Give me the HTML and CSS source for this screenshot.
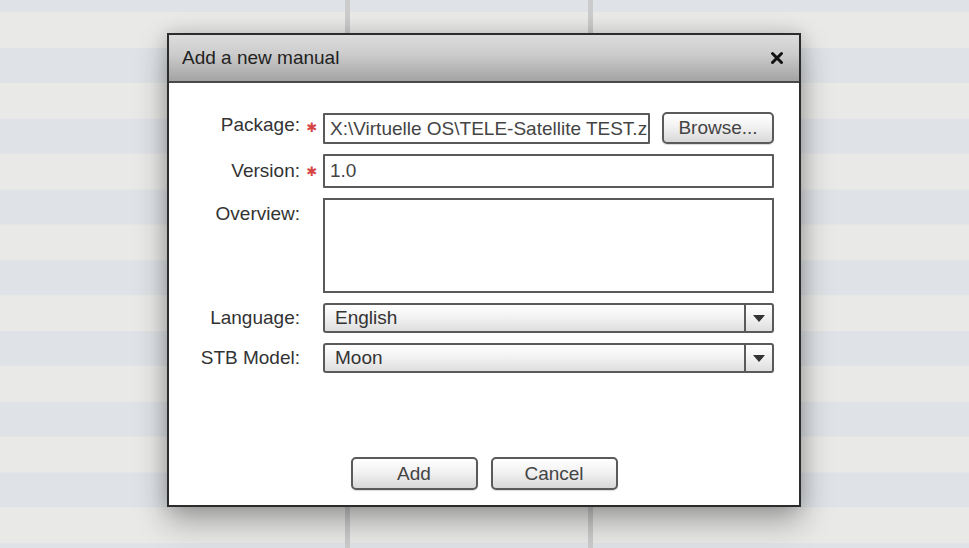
FILE: index.html
```html
<!DOCTYPE html>
<html>
<head>
<meta charset="utf-8">
<link rel="stylesheet" href="styles.css">
</head>
<body>
<div class="page">
  <div class="cols">
    <div class="col col-a"></div>
    <div class="col col-b"></div>
    <div class="col col-c"></div>
  </div>
  <div class="dialog">
    <div class="dialog-header">
      <span class="dialog-title">Add a new manual</span>
      <span class="close">
        <svg width="14" height="14" viewBox="0 0 14 14"><path d="M2.5 2.5 L11.5 11.5 M11.5 2.5 L2.5 11.5" stroke="#111" stroke-width="3" stroke-linecap="round"/></svg>
      </span>
    </div>
    <div class="dialog-body">
      <div class="form">
        <label class="lbl lbl-pkg">Package:</label>
        <span class="req">✱</span>
        <div class="field-row">
          <div class="input input-package">X:\Virtuelle OS\TELE-Satellite TEST.z</div>
          <button class="btn btn-browse">Browse...</button>
        </div>

        <label class="lbl">Version:</label>
        <span class="req">✱</span>
        <div class="input input-version">1.0</div>

        <label class="lbl lbl-top">Overview:</label>
        <span class="req"></span>
        <div class="textarea"></div>

        <label class="lbl">Language:</label>
        <span class="req"></span>
        <div class="select"><span class="select-value">English</span><span class="select-arrow"><svg width="12" height="7" viewBox="0 0 12 7"><path d="M0 0 H12 L6 7 Z" fill="#333"/></svg></span></div>

        <label class="lbl">STB Model:</label>
        <span class="req"></span>
        <div class="select"><span class="select-value">Moon</span><span class="select-arrow"><svg width="12" height="7" viewBox="0 0 12 7"><path d="M0 0 H12 L6 7 Z" fill="#333"/></svg></span></div>
      </div>
      <div class="actions">
        <button class="btn btn-action">Add</button>
        <button class="btn btn-action">Cancel</button>
      </div>
    </div>
  </div>
</div>
</body>
</html>
```

FILE: styles.css
```css
html, body {
  margin: 0;
  padding: 0;
}
body {
  font-family: "Liberation Sans", Arial, sans-serif;
  color: #333;
}
.page {
  position: relative;
  width: 969px;
  height: 548px;
  overflow: hidden;
  background-color: #e9e9e7;
  background-image: linear-gradient(to bottom, #dfe2e6 0%, #dfe2e6 50%, #e9e9e7 50%, #e9e9e7 100%);
  background-size: 100% 70.75px;
  background-repeat: repeat-y;
  background-position: 0 48px;
}
.cols {
  display: flex;
  height: 100%;
}
.col-a {
  width: 345px;
  border-right: 5px solid #cbcbcb;
}
.col-b {
  width: 238px;
  border-right: 5px solid #cbcbcb;
}
.col-c {
  flex: 1;
}
.dialog {
  position: absolute;
  left: 167px;
  top: 33px;
  width: 634px;
  height: 474px;
  box-sizing: border-box;
  border: 2px solid #2c2c2c;
  background: #fff;
  display: flex;
  flex-direction: column;
  box-shadow: 0 14px 30px rgba(0,0,0,0.32), 0 0 16px rgba(0,0,0,0.14);
}
.dialog-header {
  height: 46px;
  border-bottom: 2px solid #4a4a4a;
  background: linear-gradient(to bottom, #dcdcdc 0%, #cdcdcd 40%, #a4a4a4 100%);
  display: flex;
  align-items: center;
  justify-content: space-between;
  padding: 0 15px 0 13px;
}
.dialog-title {
  font-size: 19px;
  color: #222;
}
.close {
  display: flex;
  align-items: center;
}
.dialog-body {
  flex: 1;
  display: flex;
  flex-direction: column;
  justify-content: space-between;
  padding: 28px 25px 15px 0;
}
.form {
  display: grid;
  grid-template-columns: 131px 23px 1fr;
  row-gap: 10px;
  align-items: center;
}
.lbl {
  text-align: right;
  font-size: 19px;
  color: #333;
}
.lbl-pkg {
  position: relative;
  top: -3px;
}
.lbl-top {
  align-self: start;
  padding-top: 5px;
}
.req {
  color: #d64545;
  font-family: "DejaVu Sans", sans-serif;
  font-size: 13px;
  text-align: center;
  padding-left: 1px;
}
.field-row {
  display: flex;
  align-items: center;
  justify-content: space-between;
}
.input {
  box-sizing: border-box;
  border: 2px solid #5a5a5a;
  border-radius: 1px;
  background: #fff;
  font-size: 19px;
  color: #444;
  padding: 0 5px;
  display: flex;
  align-items: center;
  white-space: nowrap;
  overflow: hidden;
}
.input-package {
  width: 327px;
  height: 31px;
  margin-top: 2px;
}
.input-version {
  height: 34px;
}
.textarea {
  box-sizing: border-box;
  height: 95px;
  border: 2px solid #5a5a5a;
  background: #fff;
}
.select {
  box-sizing: border-box;
  height: 30px;
  border: 2px solid #5a5a5a;
  border-radius: 3px;
  background: linear-gradient(to bottom, #ffffff 0%, #f1f1f1 50%, #dedede 100%);
  display: flex;
  align-items: stretch;
}
.select-value {
  flex: 1;
  font-size: 19px;
  color: #333;
  padding-left: 10px;
  display: flex;
  align-items: center;
}
.select-arrow {
  width: 26px;
  border-left: 2px solid #5a5a5a;
  display: flex;
  align-items: center;
  justify-content: center;
}
.btn {
  box-sizing: border-box;
  font-family: "Liberation Sans", Arial, sans-serif;
  font-size: 19px;
  color: #444;
  border: 2px solid #5a5a5a;
  border-radius: 5px;
  background: linear-gradient(to bottom, #ffffff 0%, #f2f2f2 45%, #d8d8d8 100%);
  padding: 0;
  box-shadow: 0 1px 1px rgba(0,0,0,0.15);
}
.btn-browse {
  width: 112px;
  height: 32px;
}
.actions {
  display: flex;
  justify-content: center;
  gap: 13px;
  padding-left: 25px;
}
.btn-action {
  width: 127px;
  height: 33px;
}
```
